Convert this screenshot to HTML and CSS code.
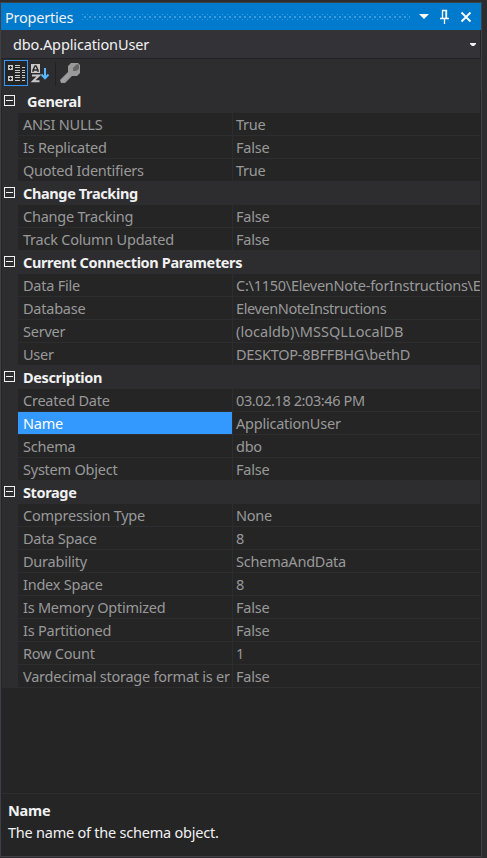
FILE: index.html
```
<!DOCTYPE html>
<html lang="en">
<head>
<meta charset="utf-8">
<title>Properties</title>
<link rel="stylesheet" href="styles.css">
</head>
<body>
<main class="panel">
  <header class="titlebar">
    <h1 class="title">Properties</h1>
    <svg class="grip" width="328" height="6" aria-hidden="true">
      <defs><pattern id="dots" width="5" height="6" patternUnits="userSpaceOnUse"><path d="M0 0h1v1H0zM2 2h2v2H2zM0 5h1v1H0z" fill="#6bb5e8" fill-opacity=".55"/></pattern></defs>
      <rect width="328" height="6" fill="url(#dots)"/>
    </svg>
    <svg class="controls" width="54" height="16" viewBox="418 8 54 16" aria-hidden="true">
      <path d="M419 13h10l-5 5z" fill="#fff"/>
      <path d="M442.5 17V9.5h4V17M446 9v8M440 17.5h9M444.5 18v5" fill="none" stroke="#fff" stroke-width="1.3"/>
      <path d="M461.5 11.5l9 9M470.5 11.5l-9 9" stroke="#fff" stroke-width="1.8"/>
    </svg>
  </header>
  <div class="selector"><span class="t">dbo.ApplicationUser</span>
    <svg width="6" height="3" aria-hidden="true"><path d="M0 0h6v1L4 3H2L0 1z" fill="#f1f1f1"/></svg>
  </div>
  <div class="toolbar">
    <svg width="90" height="31" viewBox="0 59 90 31" aria-hidden="true">
      <rect x="4.5" y="60.5" width="23" height="25" fill="#252526" stroke="#3399ff"/>
      <path d="M8 65h5v5H8zM8 76h5v5H8z" fill="#c8c8c8"/>
      <path d="M9 67.5h3M10.500 66v3M9 78.500h3M10.500 77v3" stroke="#252526"/>
      <path d="M15 65.500h5M15 67.500h5M15 70.500h5M15 72.500h5M15 75.500h5M15 77.500h5M15 80.500h5M22 67.500h3M22 70.500h3M22 72.500h3M22 75.500h3M22 77.500h3M22 80.500h3" stroke="#c8c8c8"/>
      <path d="M31 64h9v9h-9z" fill="#c8c8c8"/>
      <path d="M33 72v-2l2-4h1l2 4v2M33.500 70h4.500" fill="none" stroke="#252526" stroke-width="1.300"/>
      <path d="M32 75.500h7l-6 5.800h6.500" fill="none" stroke="#c8c8c8" stroke-width="2"/>
      <path d="M45 68v10M41.500 74.500l3.500 3.700 3.500-3.700" fill="none" stroke="#55b8ff" stroke-width="2"/>
      <path d="M55.500 62v24" stroke="#222224"/>
      <path d="M71 63h7l2 2v8l-3 3h-5l-7 7h-4l-1-3 8-8v-6z" fill="#999"/>
      <path d="M73 68l4-4 2 1v4l-3 2h-3z" fill="#666"/>
      <path d="M62 81.500l7-7" stroke="#b0b0b0"/>
    </svg>
  </div>
  <section class="grid">
    <h2 class="cat first"><i class="toggle"></i><span class="t">General</span></h2>
    <div class="row"><span class="k">ANSI NULLS</span><span class="v">True</span></div>
    <div class="row"><span class="k">Is Replicated</span><span class="v">False</span></div>
    <div class="row"><span class="k">Quoted Identifiers</span><span class="v">True</span></div>
    <h2 class="cat"><i class="toggle"></i><span class="t">Change Tracking</span></h2>
    <div class="row"><span class="k">Change Tracking</span><span class="v">False</span></div>
    <div class="row"><span class="k">Track Column Updated</span><span class="v">False</span></div>
    <h2 class="cat"><i class="toggle"></i><span class="t">Current Connection Parameters</span></h2>
    <div class="row"><span class="k">Data File</span><span class="v path">C:\1150\ElevenNote-forInstructions\E</span></div>
    <div class="row"><span class="k">Database</span><span class="v tight">ElevenNoteInstructions</span></div>
    <div class="row"><span class="k">Server</span><span class="v wide">(localdb)\MSSQLLocalDB</span></div>
    <div class="row"><span class="k">User</span><span class="v">DESKTOP-8BFFBHG\bethD</span></div>
    <h2 class="cat"><i class="toggle"></i><span class="t">Description</span></h2>
    <div class="row"><span class="k">Created Date</span><span class="v tight">03.02.18 2:03:46 PM</span></div>
    <div class="row selected"><span class="k">Name</span><span class="v">ApplicationUser</span></div>
    <div class="row"><span class="k">Schema</span><span class="v">dbo</span></div>
    <div class="row"><span class="k">System Object</span><span class="v">False</span></div>
    <h2 class="cat"><i class="toggle"></i><span class="t">Storage</span></h2>
    <div class="row"><span class="k">Compression Type</span><span class="v">None</span></div>
    <div class="row"><span class="k">Data Space</span><span class="v">8</span></div>
    <div class="row"><span class="k">Durability</span><span class="v">SchemaAndData</span></div>
    <div class="row"><span class="k">Index Space</span><span class="v">8</span></div>
    <div class="row"><span class="k">Is Memory Optimized</span><span class="v">False</span></div>
    <div class="row"><span class="k">Is Partitioned</span><span class="v">False</span></div>
    <div class="row"><span class="k">Row Count</span><span class="v">1</span></div>
    <div class="row"><span class="k">Vardecimal storage format is er</span><span class="v">False</span></div>
  </section>
  <footer class="help"><h3>Name</h3><p>The name of the schema object.</p></footer>
</main>
</body>
</html>
```
FILE: styles.css
```
* { box-sizing: border-box; }
body { margin: 0; height: 858px; overflow: hidden; background: #2d2d30; padding-top: 2px; font: 14.5px/22px "Noto Sans", sans-serif; letter-spacing: -0.23px; color: #f1f1f1; }
h1, h2, h3, p { margin: 0; font-size: inherit; }
.panel { width: 482px; height: 855px; display: flex; flex-direction: column; border: 1px solid #3f3f46; background: #252526; }
.titlebar { height: 27px; flex: none; display: flex; align-items: center; background: #007acc; padding: 0 9px 0 4px; }
.title { width: 77px; font-size: 14.5px; font-weight: 400; white-space: nowrap; }
.grip { flex: none; }
.controls { flex: none; margin-left: auto; }
.selector { height: 28px; flex: none; display: flex; align-items: center; justify-content: space-between; padding: 0 4px 0 12px; background: #333337; margin-right: 1px; letter-spacing: -0.13px; }
.toolbar { height: 32px; flex: none; border-top: 1px solid #222224; background: #2d2d30; }
.toolbar svg { display: block; margin-left: -1px; }
.grid { height: 704px; flex: none; margin: 0 1px; border-bottom: 1px solid #2d2d30; }
.cat { height: 23px; display: flex; align-items: center; background: #2d2d30; font-weight: 700; padding-left: 2px; letter-spacing: -0.37px; }
.cat .t { margin: -2px 0 0 8px; }
.first .t { margin-left: 12px; }
.toggle { width: 11px; height: 11px; border: 1px solid #f1f1f1; margin-top: -2px; background: linear-gradient(#f1f1f1, #f1f1f1) center / 7px 1px no-repeat; }
.row { height: 23px; display: grid; grid-template-columns: 214px 1fr; column-gap: 1px; padding-left: 16px; padding-bottom: 1px; background: #2d2d30; color: #999; }
.row span { background: #252526; overflow: hidden; white-space: nowrap; }
.k { padding-left: 5px; }
.v { padding-left: 3px; }
.row .path { letter-spacing: -0.26px; }
.row .tight { letter-spacing: -0.4px; }
.row .wide { letter-spacing: 0.05px; }
.row.selected .k { background: #3399ff; color: #fff; }
.help { padding: 5px 7px 0; }
```
